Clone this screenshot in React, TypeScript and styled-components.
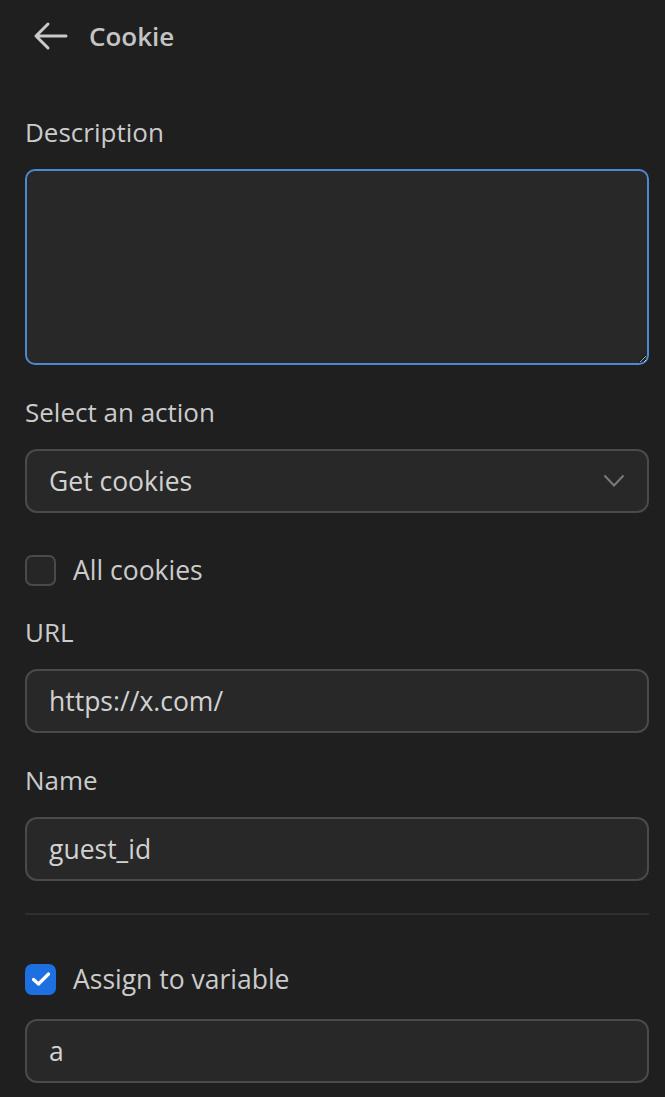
import React from "react";
import styled, { createGlobalStyle } from "styled-components";

const Global = createGlobalStyle`
  html, body { margin: 0; padding: 0; background: #1f1f1f; }
  body { font-family: "Open Sans", "Noto Sans", sans-serif; color: #cfcfcf; }
  * { box-sizing: border-box; }
`;

const Page = styled.div`
  width: 665px;
  min-height: 1097px;
  background: #1f1f1f;
  padding: 0 16px 0 25px;
`;

const Header = styled.div`
  display: flex;
  align-items: center;
  height: 72px;
  gap: 20px;
  padding-left: 6px;
`;

const BackButton = styled.button`
  display: flex;
  align-items: center;
  justify-content: center;
  width: 38px;
  height: 38px;
  background: none;
  border: none;
  padding: 0;
  color: #c8c8c8;
  cursor: pointer;
`;

const Title = styled.h1`
  margin: 0;
  font-size: 26px;
  font-weight: 600;
  color: #c4c4c4;
  letter-spacing: 0;
`;

const Form = styled.div`
  display: flex;
  flex-direction: column;
  padding-top: 40px;
`;

const Label = styled.div<{ $mb?: number }>`
  font-size: 26px;
  line-height: 40px;
  color: #cbcbcb;
  margin-bottom: ${(p) => p.$mb ?? 17}px;
`;

const TextArea = styled.textarea`
  width: 100%;
  height: 196px;
  background: #282828;
  border: 2px solid #4d88d2;
  border-radius: 10px;
  resize: vertical;
  font: inherit;
  color: #d0d0d0;
  outline: none;
  margin: 0 0 27px;
  display: block;
`;

const Field = styled.div<{ $mb?: number }>`
  display: flex;
  align-items: center;
  justify-content: space-between;
  height: 64px;
  background: #282828;
  border: 2px solid #4a4a4a;
  border-radius: 12px;
  padding: 0 22px 0 22px;
  font-size: 26.5px;
  color: #d2d2d2;
  margin-bottom: ${(p) => p.$mb ?? 27}px;
`;

const CheckRow = styled.label<{ $mb?: number }>`
  display: flex;
  align-items: center;
  gap: 17px;
  height: 40px;
  font-size: 26.5px;
  color: #cbcbcb;
  margin-bottom: ${(p) => p.$mb ?? 20}px;
`;

const Box = styled.span<{ $checked?: boolean }>`
  display: flex;
  align-items: center;
  justify-content: center;
  width: 31px;
  height: 31px;
  border-radius: 7px;
  background: ${(p) => (p.$checked ? "#1e6fe0" : "#262626")};
  border: 2px solid ${(p) => (p.$checked ? "#1e6fe0" : "#4a4a4a")};
`;

const Divider = styled.hr`
  width: 100%;
  border: none;
  border-top: 2px solid #2f2f2f;
  margin: 32px 0 44px;
`;

const Chevron = () => (
  <svg width="22" height="14" viewBox="0 0 22 14" fill="none">
    <path d="M1.5 1.5 L11 11.5 L20.5 1.5" stroke="#7a7a7a" strokeWidth="2" />
  </svg>
);

export default function App() {
  return (
    <>
      <Global />
      <Page>
        <Header>
          <BackButton aria-label="Back">
            <svg width="36" height="30" viewBox="0 0 36 30" fill="none">
              <path
                d="M34 15 H4 M16 3 L4 15 L16 27"
                stroke="#cacaca"
                strokeWidth="3"
                strokeLinecap="round"
                strokeLinejoin="round"
              />
            </svg>
          </BackButton>
          <Title>Cookie</Title>
        </Header>
        <Form>
          <Label $mb={17}>Description</Label>
          <TextArea />
          <Label $mb={17}>Select an action</Label>
          <Field $mb={37}>
            <span>Get cookies</span>
            <Chevron />
          </Field>
          <CheckRow $mb={22}>
            <Box />
            All cookies
          </CheckRow>
          <Label $mb={17}>URL</Label>
          <Field $mb={27}>https://x.com/</Field>
          <Label $mb={17}>Name</Label>
          <Field $mb={0}>guest_id</Field>
          <Divider />
          <CheckRow $mb={20}>
            <Box $checked>
              <svg width="20" height="16" viewBox="0 0 20 16" fill="none">
                <path
                  d="M2.5 8.5 L7.5 13 L17.5 3"
                  stroke="#ffffff"
                  strokeWidth="3.2"
                  strokeLinecap="round"
                  strokeLinejoin="round"
                />
              </svg>
            </Box>
            Assign to variable
          </CheckRow>
          <Field $mb={0}>a</Field>
        </Form>
      </Page>
    </>
  );
}
